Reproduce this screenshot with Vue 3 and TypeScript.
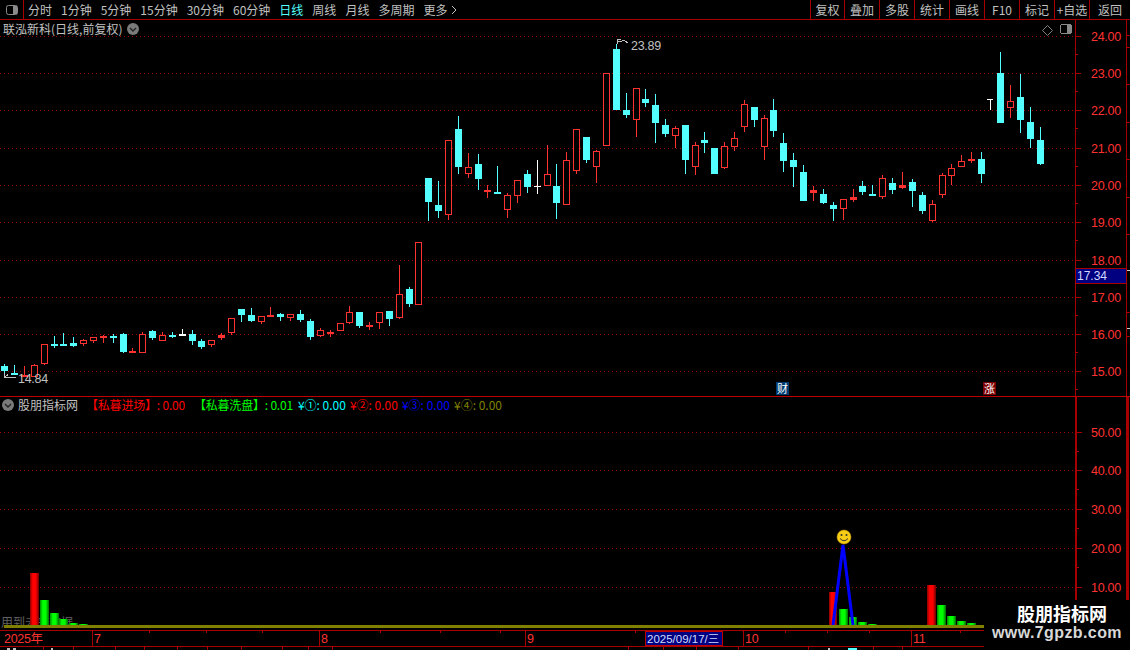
<template>
    <div class="terminal">
        <header class="toolbar">
            <div class="layoutBtn">
                <svg width="14" height="12" viewBox="0 0 14 12">
                    <rect x="1.5" y="1.5" width="11" height="9" rx="2" fill="none" stroke="#8a8a8a" />
                    <rect x="8" y="2" width="4" height="8" fill="#8a8a8a" />
                </svg>
            </div>
            <nav class="periods">
                <span v-for="p of periods" :key="p" :class="{ active: p === '日线' }">{{ p }}</span>
                <span class="more">更多 <svg width="6" height="10" viewBox="0 0 6 10"><path d="M1 1 L5 5 L1 9" fill="none" stroke="#c0c0c0" /></svg></span>
            </nav>
            <div class="actions">
                <span v-for="a of actions" :key="a">{{ a }}</span>
            </div>
        </header>

        <section class="panel pricePanel">
            <svg class="canvas" width="1130" height="376" viewBox="0 20 1130 376" shape-rendering="crispEdges">
                <g v-for="t of priceTicks" :key="t.label">
                    <line x1="0" :x2="1075" :y1="t.y + 0.5" :y2="t.y + 0.5" class="dots" />
                    <rect x="1075" :y="t.y" width="6" height="1" class="axisFill" />
                    <rect x="1075" :y="t.y + 18" width="3" height="1" class="axisFill" />
                    <text x="1091" :y="t.y + 5" class="axisText">{{ t.label }}</text>
                </g>
                <rect x="1075" y="20" width="1" height="376" class="axisFill" />
                <rect x="1126" y="20" width="1" height="376" class="axisFill" />
                <rect v-for="y of sideTicks" :key="y" x="1127" :y="y" width="3" height="1" class="axisFill" />
                <rect x="1127" y="270" width="3" height="1" fill="#d0d0d0" />
                <rect x="1127" y="328" width="3" height="1" fill="#d0d0d0" />

                <g v-for="c of candles" :key="c.x">
                    <rect :x="c.x" :y="c.wickTop" width="1" :height="c.wickBottom - c.wickTop" :class="c.kind" />
                    <rect
                        v-if="c.bottom - c.top <= 3 || c.kind !== 'up'"
                        :x="c.x - 3" :y="c.top" width="7" :height="c.bottom - c.top"
                        :class="c.kind"
                    />
                    <rect
                        v-else
                        :x="c.x - 2.5" :y="c.top + 0.5" width="6" :height="c.bottom - c.top - 1"
                        class="hollow"
                    />
                </g>

                <rect x="987" y="99" width="6" height="1" fill="#fff" />
                <rect x="990" y="99" width="1" height="11" fill="#fff" />

                <path d="M617.5 44 V39.5 H620.5 M617.5 41.5 H620 L624 40.5 L628 43" fill="none" stroke="#c0c0c0" />
                <text x="631" y="50" class="noteText">23.89</text>
                <path d="M4.5 373 V377.5 H16 M4.5 377.5 L8 374.5" fill="none" stroke="#c0c0c0" />
                <text x="18" y="383" class="noteText">14.84</text>

                <path d="M1047.5 25.5 L1052.5 30.5 L1047.5 35.5 L1042.5 30.5 Z" fill="none" stroke="#808080" shape-rendering="auto" />
                <rect x="1060.5" y="24.5" width="11" height="9" rx="2" fill="none" stroke="#8a8a8a" />
                <rect x="1067" y="25" width="4" height="8" fill="#8a8a8a" />

                <rect x="776" y="382" width="13" height="13" fill="#003a70" />
                <text x="777" y="393" class="badgeText">财</text>
                <rect x="983" y="382" width="13" height="13" fill="#7c0000" />
                <text x="984" y="393" class="badgeText">涨</text>
            </svg>

            <div class="lastPrice">17.34</div>

            <div class="title">
                <span>联泓新科(日线,前复权)</span>
                <svg width="12" height="12" viewBox="0 0 12 12">
                    <circle cx="6" cy="6" r="6" fill="#7a7a7a" />
                    <path d="M3 5 L6 8 L9 5" fill="none" stroke="#222" stroke-width="1.4" />
                </svg>
            </div>
        </section>

        <section class="panel indicatorPanel">
            <svg class="canvas" width="1130" height="233" viewBox="0 397 1130 233" shape-rendering="crispEdges">
                <defs>
                    <linearGradient id="redBar">
                        <stop offset="0" stop-color="#8a0000" />
                        <stop offset="0.3" stop-color="#ff0000" />
                        <stop offset="0.65" stop-color="#ff0000" />
                        <stop offset="1" stop-color="#6a0000" />
                    </linearGradient>
                    <linearGradient id="greenBar">
                        <stop offset="0" stop-color="#008a00" />
                        <stop offset="0.3" stop-color="#00ff00" />
                        <stop offset="0.65" stop-color="#00ff00" />
                        <stop offset="1" stop-color="#006a00" />
                    </linearGradient>
                </defs>

                <g v-for="t of volTicks" :key="t.label">
                    <line x1="0" x2="1075" :y1="t.y + 0.5" :y2="t.y + 0.5" class="dots" />
                    <rect x="1075" :y="t.y" width="7" height="1" class="axisFill" />
                    <rect x="1075" :y="t.y + 19" width="4" height="1" class="axisFill" />
                    <text x="1091" :y="t.y + 5" class="axisText">{{ t.label }}</text>
                </g>
                <rect x="1075" y="397" width="2" height="233" class="axisFill" />
                <rect x="1126" y="397" width="3" height="233" class="axisFill" />

                <text x="1" y="627" class="futureText">用到未来数据</text>

                <rect
                    v-for="b of bars" :key="b.x"
                    :x="b.x" :y="b.y" :width="b.w" :height="625 - b.y"
                    :fill="b.red ? 'url(#redBar)' : 'url(#greenBar)'"
                />

                <polyline
                    points="833,625 843,545 853,625"
                    fill="none" stroke="#0000ff" stroke-width="3"
                    shape-rendering="auto"
                />
                <g shape-rendering="auto">
                    <circle cx="844" cy="537" r="7" fill="#f6cc14" stroke="#c89a10" stroke-width="0.5" />
                    <circle cx="841.5" cy="535" r="1" fill="#333" />
                    <circle cx="846.5" cy="535" r="1" fill="#333" />
                    <path d="M840 538.5 Q844 543 848 538.5" fill="none" stroke="#333" />
                </g>

                <rect x="4" y="625" width="1071" height="3" fill="#808000" />
            </svg>

            <div class="legend">
                <svg width="12" height="12" viewBox="0 0 12 12">
                    <circle cx="6" cy="6" r="6" fill="#7a7a7a" />
                    <path d="M3 5 L6 8 L9 5" fill="none" stroke="#222" stroke-width="1.4" />
                </svg>
                <span class="site">股朋指标网</span>
                <span class="red signal lead">【私暮进场】: 0.00</span>
                <span class="green signal">【私暮洗盘】: 0.01</span>
                <div class="coins">
                    <span class="cyan">¥①: 0.00</span>
                    <span class="red">¥②: 0.00</span>
                    <span class="blue">¥③: 0.00</span>
                    <span class="olive">¥④: 0.00</span>
                </div>
            </div>
        </section>

        <svg class="timeline" width="1130" height="20" viewBox="0 630 1130 20" shape-rendering="crispEdges">
            <rect x="0" y="630" width="1130" height="1" class="axisFill" />
            <rect x="0" y="646" width="1130" height="1" class="axisFill" />
            <g v-for="m of months" :key="m.label">
                <rect :x="m.x" y="631" width="1" height="15" class="axisFill" />
                <text :x="m.x + 2" y="643" class="timeText">{{ m.label }}</text>
            </g>
            <rect v-for="x of minorTicks" :key="x" :x="x" y="631" width="1" height="2" class="axisFill" />
            <text x="4" y="643" class="timeText">2025年</text>

            <rect x="645.5" y="631.5" width="77" height="14" fill="#000080" class="dateBox" />
            <text x="647" y="643" class="dateText">2025/09/17/三</text>

            <rect v-for="x of stripLines" :key="x" :x="x" y="647" width="1" height="3" class="axisFill" />
            <rect x="7" y="648" width="3" height="2" fill="#c0c0c0" />
            <rect x="13" y="648" width="3" height="2" fill="#c0c0c0" />
            <rect x="51" y="648" width="2" height="2" fill="#c0c0c0" />
            <rect x="828" y="648" width="2" height="2" fill="#c0c0c0" />
            <rect x="848" y="648" width="9" height="2" fill="#54ffff" />
        </svg>

        <div class="watermark">
            <div class="wmName">股朋指标网</div>
            <div class="wmUrl">www.7gpzb.com</div>
        </div>
    </div>
</template>

<script setup lang="ts">

// -- =====================================================================================

    type Kind = 'up' | 'down' | 'flat'

    const periods = [ '分时', '1分钟', '5分钟', '15分钟', '30分钟', '60分钟', '日线', '周线', '月线', '多周期' ]
    const actions = [ '复权', '叠加', '多股', '统计', '画线', 'F10', '标记', '+自选', '返回' ]

    const priceTicks = [
        { label: '24.00', y: 36 }, { label: '23.00', y: 73 }, { label: '22.00', y: 110 },
        { label: '21.00', y: 148 }, { label: '20.00', y: 185 }, { label: '19.00', y: 222 },
        { label: '18.00', y: 260 }, { label: '17.00', y: 297 }, { label: '16.00', y: 334 },
        { label: '15.00', y: 371 }
    ]

    const volTicks = [
        { label: '50.00', y: 432 }, { label: '40.00', y: 470 }, { label: '30.00', y: 509 },
        { label: '20.00', y: 548 }, { label: '10.00', y: 587 }
    ]

    const sideTicks = [ 35, 47, 84, 122, 159, 197, 234, 312, 336 ]

    const months = [
        { label: '7', x: 92 }, { label: '8', x: 319 }, { label: '9', x: 525 },
        { label: '10', x: 743 }, { label: '11', x: 911 }
    ]
    const minorTicks = [ 149, 206, 262, 380, 440, 500, 635, 785, 827, 869, 960 ]
    const stripLines = [ 43, 73, 115, 144, 177, 207, 241, 282, 308, 332, 628, 663, 696, 738, 808, 873, 902 ]

// -- =====================================================================================

    // x, body top, body bottom, wick top, wick bottom, kind
    const raw: [ number, number, number, number, number, Kind ][] = [
        [ 4, 366, 371, 364, 377, 'down' ], [ 14, 373, 375, 365, 375, 'down' ], [ 24, 375, 377, 366, 377, 'up' ],
        [ 34, 365, 377, 364, 377, 'up' ], [ 44, 344, 364, 344, 365, 'up' ], [ 54, 344, 346, 336, 348, 'down' ],
        [ 63, 344, 346, 333, 346, 'down' ], [ 73, 343, 346, 337, 347, 'down' ], [ 83, 340, 344, 339, 346, 'up' ],
        [ 93, 337, 341, 337, 343, 'up' ], [ 103, 336, 338, 335, 343, 'up' ], [ 113, 336, 338, 334, 343, 'down' ],
        [ 123, 334, 352, 333, 353, 'down' ], [ 132, 351, 353, 348, 353, 'up' ], [ 142, 334, 353, 332, 353, 'up' ],
        [ 152, 331, 338, 330, 340, 'down' ], [ 162, 335, 341, 332, 341, 'up' ], [ 172, 335, 337, 332, 338, 'down' ],
        [ 182, 334, 336, 329, 336, 'flat' ], [ 192, 334, 341, 330, 345, 'down' ], [ 201, 341, 347, 339, 349, 'down' ],
        [ 211, 340, 345, 340, 347, 'up' ], [ 221, 335, 338, 333, 340, 'up' ], [ 231, 318, 333, 318, 335, 'up' ],
        [ 241, 309, 315, 309, 322, 'down' ], [ 251, 315, 321, 308, 322, 'down' ], [ 261, 316, 322, 316, 324, 'up' ],
        [ 270, 315, 317, 307, 317, 'up' ], [ 280, 314, 317, 313, 321, 'down' ], [ 290, 314, 318, 314, 321, 'up' ],
        [ 300, 314, 320, 310, 322, 'down' ], [ 310, 321, 337, 319, 340, 'down' ], [ 320, 330, 336, 328, 337, 'up' ],
        [ 330, 332, 334, 330, 337, 'up' ], [ 340, 323, 331, 323, 331, 'up' ], [ 349, 312, 323, 306, 324, 'up' ],
        [ 359, 312, 326, 312, 328, 'down' ], [ 369, 325, 327, 322, 330, 'up' ], [ 379, 312, 323, 312, 329, 'up' ],
        [ 389, 311, 319, 311, 326, 'down' ], [ 399, 294, 318, 265, 319, 'up' ], [ 409, 289, 304, 287, 307, 'down' ],
        [ 418, 242, 305, 242, 305, 'up' ], [ 428, 178, 202, 178, 221, 'down' ], [ 438, 205, 211, 181, 218, 'down' ],
        [ 448, 140, 215, 140, 220, 'up' ], [ 458, 129, 167, 116, 174, 'down' ], [ 468, 167, 174, 153, 178, 'up' ],
        [ 478, 164, 179, 154, 190, 'down' ], [ 487, 190, 192, 185, 198, 'up' ], [ 497, 192, 194, 166, 194, 'down' ],
        [ 507, 195, 210, 193, 218, 'up' ], [ 517, 180, 196, 180, 203, 'up' ], [ 527, 174, 187, 170, 193, 'down' ],
        [ 537, 186, 187, 160, 194, 'flat' ], [ 547, 174, 186, 145, 186, 'up' ], [ 556, 186, 203, 164, 219, 'down' ],
        [ 566, 160, 205, 152, 205, 'up' ], [ 576, 129, 171, 129, 174, 'up' ], [ 586, 137, 160, 137, 163, 'down' ],
        [ 596, 151, 167, 150, 183, 'up' ], [ 606, 73, 146, 73, 146, 'up' ], [ 616, 49, 110, 44, 110, 'down' ],
        [ 626, 110, 115, 93, 118, 'down' ], [ 636, 88, 120, 88, 137, 'up' ], [ 645, 99, 103, 89, 107, 'down' ],
        [ 655, 105, 123, 94, 143, 'down' ], [ 665, 125, 134, 119, 137, 'down' ], [ 675, 128, 136, 126, 148, 'up' ],
        [ 685, 125, 160, 125, 174, 'down' ], [ 695, 145, 167, 142, 175, 'up' ], [ 704, 140, 143, 132, 153, 'down' ],
        [ 714, 148, 174, 148, 174, 'down' ], [ 724, 146, 168, 142, 169, 'up' ], [ 734, 138, 147, 132, 151, 'up' ],
        [ 744, 104, 127, 100, 132, 'up' ], [ 754, 107, 120, 107, 127, 'down' ], [ 764, 118, 147, 115, 160, 'up' ],
        [ 773, 110, 131, 99, 137, 'down' ], [ 783, 143, 161, 133, 172, 'down' ], [ 793, 160, 167, 153, 187, 'down' ],
        [ 803, 172, 201, 165, 201, 'down' ], [ 813, 190, 193, 186, 201, 'up' ], [ 823, 194, 203, 189, 204, 'down' ],
        [ 833, 205, 209, 202, 221, 'down' ], [ 843, 199, 209, 199, 220, 'up' ], [ 853, 197, 200, 189, 202, 'up' ],
        [ 862, 186, 192, 181, 195, 'down' ], [ 872, 194, 196, 185, 196, 'down' ], [ 882, 178, 197, 175, 199, 'up' ],
        [ 892, 183, 190, 178, 194, 'down' ], [ 902, 185, 188, 172, 189, 'up' ], [ 912, 182, 191, 179, 207, 'down' ],
        [ 922, 195, 211, 192, 214, 'down' ], [ 932, 204, 221, 200, 222, 'up' ], [ 942, 175, 195, 173, 198, 'up' ],
        [ 951, 168, 176, 164, 185, 'up' ], [ 961, 161, 167, 155, 167, 'up' ], [ 971, 159, 161, 152, 163, 'up' ],
        [ 981, 159, 174, 152, 183, 'down' ], [ 1000, 73, 123, 52, 123, 'down' ], [ 1010, 101, 108, 85, 118, 'up' ],
        [ 1020, 97, 120, 74, 133, 'down' ], [ 1030, 122, 139, 107, 148, 'down' ], [ 1040, 140, 164, 127, 165, 'down' ]
    ]

    const candles = raw.map( ( [ x, top, bottom, wickTop, wickBottom, kind ] ) => (
        { x, top, bottom, wickTop, wickBottom, kind }
    ) )

    const bars = [
        { x: 30, w: 9, y: 573, red: true }, { x: 40, w: 9, y: 600, red: false }, { x: 50, w: 9, y: 613, red: false },
        { x: 59, w: 9, y: 619, red: false }, { x: 69, w: 9, y: 623, red: false }, { x: 79, w: 9, y: 624, red: false },
        { x: 829, w: 8, y: 592, red: true }, { x: 839, w: 9, y: 609, red: false }, { x: 849, w: 8, y: 617, red: false },
        { x: 858, w: 9, y: 622, red: false }, { x: 868, w: 9, y: 624, red: false },
        { x: 927, w: 9, y: 585, red: true }, { x: 937, w: 9, y: 605, red: false }, { x: 947, w: 9, y: 616, red: false },
        { x: 957, w: 9, y: 621, red: false }, { x: 967, w: 9, y: 623, red: false }
    ]

// -- =====================================================================================

</script>

<style>
    html, body {
        margin: 0;
        background: #000;
    }
</style>

<style scoped>

    .terminal {
        position: relative;
        display: flex;
        flex-direction: column;
        width: 1130px;
        height: 650px;
        overflow: hidden;
        background: #000;
        color: #c0c0c0;
        font-family: "Noto Sans CJK SC", "Liberation Sans", sans-serif;
        font-size: 12px;
    }

    .toolbar {
        display: flex;
        flex: none;
        height: 20px;
        box-sizing: border-box;
        border-bottom: 1px solid #a80000;
    }

    .layoutBtn {
        display: flex;
        align-items: center;
        justify-content: center;
        width: 23px;
        border-right: 1px solid #a80000;
    }

    .periods {
        display: flex;
        align-items: center;
        gap: 9px;
        padding-left: 4px;
        line-height: 19px;
    }

    .active {
        color: #54ffff;
    }

    .more svg {
        margin-left: 1px;
    }

    .actions {
        display: grid;
        grid-template-columns: 34px repeat(7, 35px) 41px;
        margin-left: auto;
        line-height: 19px;
        text-align: center;
        white-space: nowrap;
    }

    .actions span {
        border-left: 1px solid #a80000;
    }

    .panel {
        position: relative;
        flex: none;
    }

    .pricePanel {
        height: 377px;
        box-sizing: border-box;
        border-bottom: 1px solid #c00000;
    }

    .indicatorPanel {
        height: 233px;
    }

    .canvas {
        position: absolute;
        top: 0;
        left: 0;
        display: block;
    }

    .timeline {
        flex: none;
        display: block;
    }

    .title, .legend {
        position: relative;
        display: flex;
        align-items: center;
        white-space: nowrap;
    }

    .title {
        height: 16px;
        gap: 5px;
        padding-left: 3px;
    }

    .legend {
        height: 14px;
        gap: 7px;
        padding-left: 2px;
    }

    .title svg, .legend svg {
        margin-top: 2px;
    }

    .site {
        margin-left: -3px;
    }

    .signal {
        letter-spacing: -0.2px;
    }

    .lead {
        margin-left: 1px;
    }

    .coins {
        display: flex;
        gap: 4px;
        margin-left: -2px;
    }

    .red { color: #ff0000; }
    .green { color: #00ff00; margin-left: 2px; }
    .cyan { color: #00ffff; }
    .blue { color: #0000ff; }
    .olive { color: #808000; }

    .lastPrice {
        position: absolute;
        top: 248px;
        left: 1076px;
        width: 50px;
        height: 16px;
        box-sizing: border-box;
        border-top: 1px solid #a80000;
        border-bottom: 1px solid #a80000;
        background: #000080;
        color: #d0d8ff;
        font-family: "Liberation Sans", sans-serif;
        font-size: 12px;
        line-height: 14px;
        padding-left: 1px;
    }

    .dots {
        stroke: #980000;
        stroke-width: 1;
        stroke-dasharray: 1 3;
    }

    .axisFill { fill: #a80000; }

    .axisText, .timeText {
        fill: #ff3232;
        font-family: "Liberation Sans", sans-serif;
        font-size: 12.5px;
        letter-spacing: -0.3px;
    }

    .timeText {
        font-family: "Liberation Sans", "Noto Sans CJK SC", sans-serif;
    }

    .noteText {
        fill: #c0c0c0;
        font-family: "Liberation Sans", sans-serif;
        font-size: 12.5px;
        letter-spacing: -0.3px;
    }

    .badgeText {
        fill: #fff;
        font-size: 11px;
    }

    .futureText {
        fill: #606060;
        font-size: 12px;
    }

    .dateBox {
        stroke: #c00000;
    }

    .dateText {
        fill: #d0d8ff;
        font-family: "Liberation Sans", "Noto Sans CJK SC", sans-serif;
        font-size: 11.5px;
    }

    .up { fill: #ff3232; }
    .down { fill: #54ffff; }
    .flat { fill: #ffffff; }

    .hollow {
        fill: #000;
        stroke: #ff3232;
    }

    .watermark {
        position: absolute;
        right: 0;
        bottom: 0;
        width: 146px;
        height: 50px;
        background: #000;
        text-align: center;
    }

    .wmName {
        margin-top: 2px;
        padding-left: 10px;
        color: #fff;
        font-size: 18px;
        font-weight: 700;
        line-height: 22px;
    }

    .wmUrl {
        color: #d8d8d8;
        font-family: "Liberation Sans", sans-serif;
        font-size: 16px;
        font-weight: 700;
        line-height: 18px;
        letter-spacing: 0.4px;
    }

</style>
